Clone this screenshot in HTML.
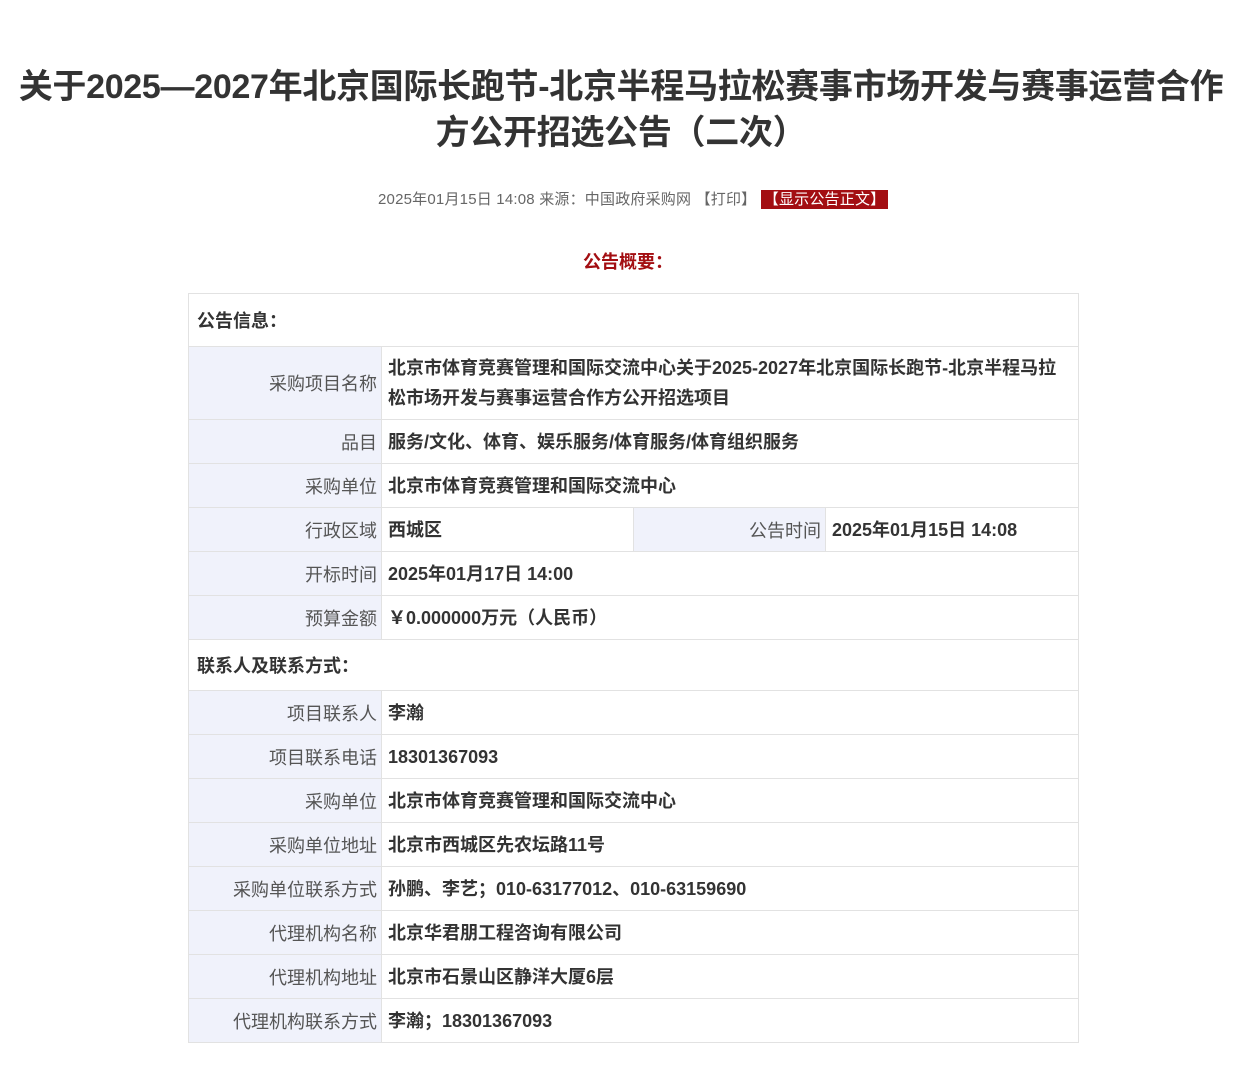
<!DOCTYPE html>
<html><head><meta charset="utf-8"><style>
*{margin:0;padding:0;box-sizing:border-box}
body{width:1260px;height:1080px;background:#fff;font-family:"Liberation Sans","Noto Sans CJK SC",sans-serif;color:#333;position:relative;overflow:hidden}
h1{position:absolute;left:0;top:64px;width:1242px;text-align:center;font-size:34px;line-height:46px;font-weight:bold;color:#333;letter-spacing:-0.3px;white-space:nowrap}
.meta{position:absolute;top:189px;left:378px;font-size:15px;color:#666;line-height:22px;white-space:nowrap;letter-spacing:0.2px}
.meta span{background:#a30e12;color:#fff;padding:1px 3px}
.sum{position:absolute;top:248px;left:0;width:1256px;text-align:center;color:#a30e12;font-weight:bold;font-size:18px}
table{position:absolute;left:188px;top:293px;border-collapse:collapse;table-layout:fixed;width:890px;font-size:18px}
td{border:1px solid #e2e2e2;padding:0 6px;color:#333}
td.l{background:#f0f2fb;text-align:right;padding:0 4px 0 0;color:#555}
td.v{font-weight:bold;line-height:30px}
td.h{font-weight:bold;padding-left:8px}
tr{height:44px}
</style></head><body>
<h1>关于2025—2027年北京国际长跑节-北京半程马拉松赛事市场开发与赛事运营合作<br>方公开招选公告（二次）</h1>
<div class="meta">2025年01月15日 14:08 来源：中国政府采购网 【打印】 <span>【显示公告正文】</span></div>
<div class="sum">公告概要：</div>
<table>
<colgroup><col style="width:193px"><col style="width:252px"><col style="width:192px"><col style="width:253px"></colgroup>
<tr style="height:53px"><td class="h" colspan="4">公告信息：</td></tr>
<tr style="height:73px"><td class="l">采购项目名称</td><td class="v" colspan="3">北京市体育竞赛管理和国际交流中心关于2025-2027年北京国际长跑节-北京半程马拉松市场开发与赛事运营合作方公开招选项目</td></tr>
<tr><td class="l">品目</td><td class="v" colspan="3">服务/文化、体育、娱乐服务/体育服务/体育组织服务</td></tr>
<tr><td class="l">采购单位</td><td class="v" colspan="3">北京市体育竞赛管理和国际交流中心</td></tr>
<tr><td class="l">行政区域</td><td class="v">西城区</td><td class="l">公告时间</td><td class="v">2025年01月15日 14:08</td></tr>
<tr><td class="l">开标时间</td><td class="v" colspan="3">2025年01月17日 14:00</td></tr>
<tr><td class="l">预算金额</td><td class="v" colspan="3">￥0.000000万元（人民币）</td></tr>
<tr style="height:51px"><td class="h" colspan="4">联系人及联系方式：</td></tr>
<tr><td class="l">项目联系人</td><td class="v" colspan="3">李瀚</td></tr>
<tr><td class="l">项目联系电话</td><td class="v" colspan="3">18301367093</td></tr>
<tr><td class="l">采购单位</td><td class="v" colspan="3">北京市体育竞赛管理和国际交流中心</td></tr>
<tr><td class="l">采购单位地址</td><td class="v" colspan="3">北京市西城区先农坛路11号</td></tr>
<tr><td class="l">采购单位联系方式</td><td class="v" colspan="3">孙鹏、李艺；010-63177012、010-63159690</td></tr>
<tr><td class="l">代理机构名称</td><td class="v" colspan="3">北京华君朋工程咨询有限公司</td></tr>
<tr><td class="l">代理机构地址</td><td class="v" colspan="3">北京市石景山区静洋大厦6层</td></tr>
<tr><td class="l">代理机构联系方式</td><td class="v" colspan="3">李瀚；18301367093</td></tr>
</table>
</body></html>
